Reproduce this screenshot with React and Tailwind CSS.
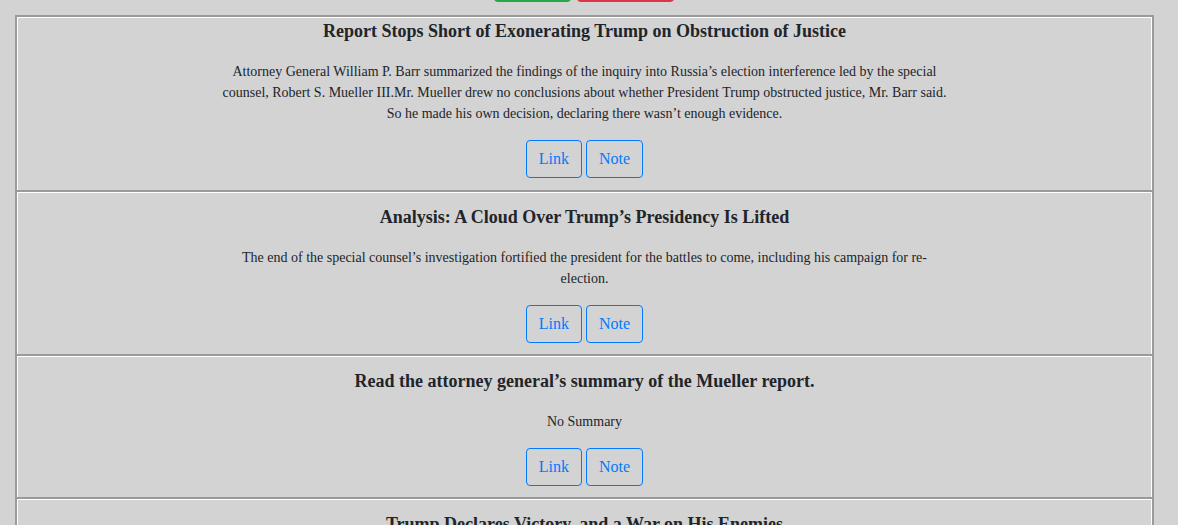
import React from 'react'

const articles = [
    {
        id: 1,
        title: "Report Stops Short of Exonerating Trump on Obstruction of Justice",
        summary: "Attorney General William P. Barr summarized the findings of the inquiry into Russia’s election interference led by the special counsel, Robert S. Mueller III.Mr. Mueller drew no conclusions about whether President Trump obstructed justice, Mr. Barr said. So he made his own decision, declaring there wasn’t enough evidence."
    },
    {
        id: 2,
        title: "Analysis: A Cloud Over Trump’s Presidency Is Lifted",
        summary: "The end of the special counsel’s investigation fortified the president for the battles to come, including his campaign for re-election."
    },
    {
        id: 3,
        title: "Read the attorney general’s summary of the Mueller report.",
        summary: "No Summary"
    },
    {
        id: 4,
        title: "Trump Declares Victory, and a War on His Enemies",
        summary: "No Summary"
    }
];

function App() {
    return (
        <div className="min-h-screen bg-[#d3d3d3] text-[#212529] font-['Liberation_Serif',serif]">
            {/* top buttons, scrolled mostly out of view */}
            <div className="flex justify-center gap-[6px] mt-[-36px] pr-[10px]">
                <button className="w-[77px] h-[38px] rounded bg-[#28a745]"></button>
                <button className="w-[97px] h-[38px] rounded bg-[#dc3545]"></button>
            </div>

            <div className="ml-[15px] mt-[13px] w-[1139px] border-x-2 border-[#9a9a9a]">
                {articles.map((a, i) => (
                    <div
                        key={a.id}
                        className={"border-t-2 border-[#9a9a9a] shadow-[inset_1px_1px_0_#fff,inset_-1px_0_0_#fff] text-center " + (i === 0 ? "pt-[1px] pb-[12px]" : "pt-[12px] pb-[11px]")}
                    >
                        <h3 className="text-[18px] leading-[27px] font-bold">{a.title}</h3>
                        <p className="mt-[16px] mx-auto max-w-[730px] text-[14px] leading-[21px]">{a.summary}</p>
                        <div className="mt-[16px] flex justify-center gap-[4px]">
                            <button className="h-[38px] px-[12px] border border-[#007bff] rounded text-[#007bff] text-[16px] leading-[24px]">Link</button>
                            <button className="h-[38px] px-[12px] border border-[#007bff] rounded text-[#007bff] text-[16px] leading-[24px]">Note</button>
                        </div>
                    </div>
                ))}
            </div>
        </div>
    )
}

export default App
